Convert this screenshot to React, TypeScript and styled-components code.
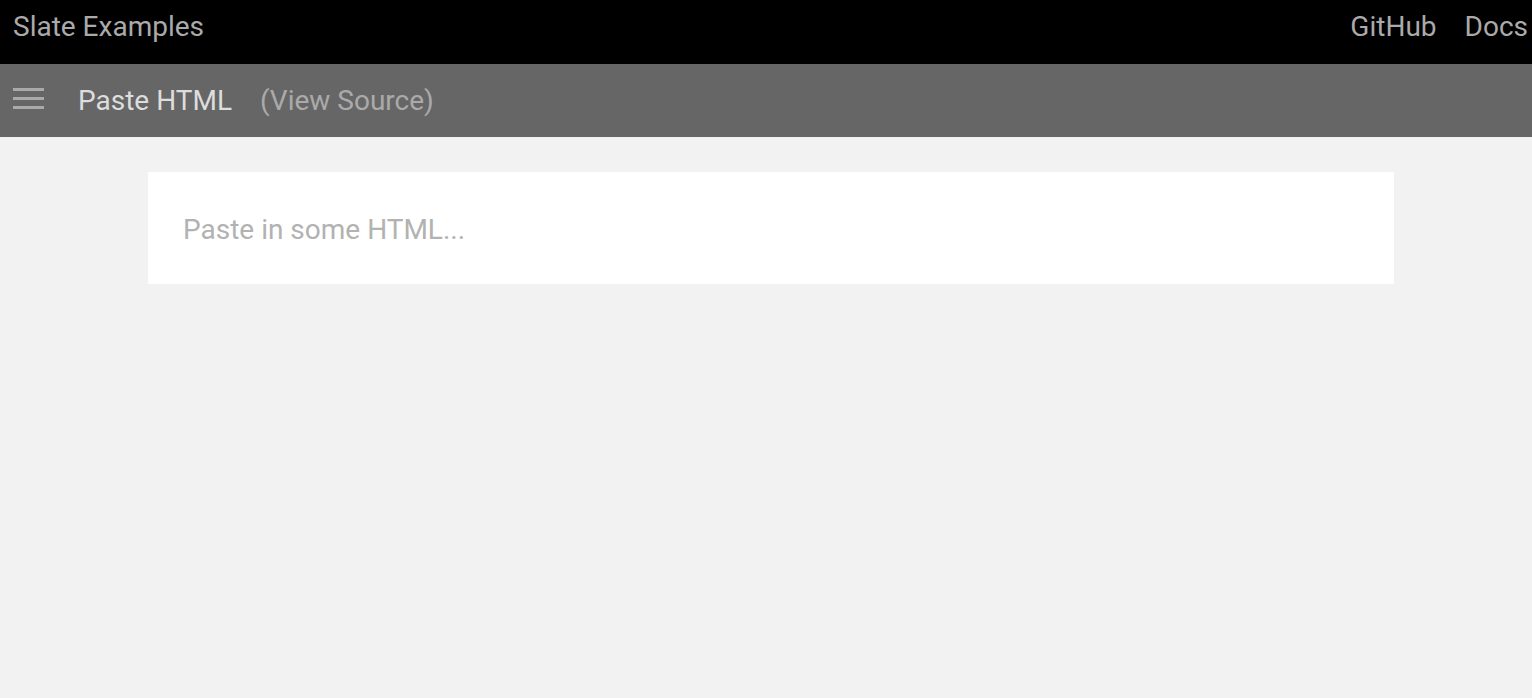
import React from 'react';
import styled, { createGlobalStyle } from 'styled-components';

const GlobalStyle = createGlobalStyle`
  html, body {
    margin: 0;
    padding: 0;
    background: #f2f2f2;
    font-family: Roboto, "Liberation Sans", sans-serif;
  }
`;

const Page = styled.div`
  min-height: 698px;
  background: #f2f2f2;
`;

const Header = styled.header`
  display: flex;
  align-items: flex-start;
  justify-content: space-between;
  height: 64px;
  box-sizing: border-box;
  padding: 13px 4px 0 13px;
  background: #000;
  color: #aaa;
  font-size: 28px;
  line-height: 1;
`;

const Title = styled.span`
  color: #aaa;
`;

const LinkGroup = styled.nav`
  display: flex;
  gap: 28px;
`;

const HeaderLink = styled.a`
  color: #aaa;
  text-decoration: none;
`;

const TabsBar = styled.div`
  display: flex;
  align-items: flex-start;
  height: 73px;
  box-sizing: border-box;
  padding: 23px 0 0 12px;
  background: #666;
  font-size: 28px;
  line-height: 1;
`;

const MenuButton = styled.span`
  display: flex;
  width: 33px;
  height: 24px;
  margin-right: 33px;
`;

const ExampleTitle = styled.span`
  color: #ddd;
  margin-right: 28px;
`;

const SourceLink = styled.a`
  color: #aaa;
  text-decoration: none;
`;

const Wrapper = styled.div`
  padding-top: 35px;
  display: flex;
  justify-content: center;
`;

const Editor = styled.div`
  width: 1246px;
  box-sizing: border-box;
  margin-left: 10px;
  padding: 37px 35px 33px;
  background: #fff;
  font-size: 28px;
  line-height: 42px;
`;

const Placeholder = styled.span`
  color: #aaa;
  opacity: 0.9;
`;

const MenuIcon = () => (
  <svg width="33" height="24" viewBox="0 0 33 24">
    <rect x="1" y="1" width="31" height="3" fill="#aaa" />
    <rect x="1" y="10" width="31" height="3" fill="#aaa" />
    <rect x="1" y="19" width="31" height="3" fill="#aaa" />
  </svg>
);

export default function App() {
  return (
    <Page>
      <GlobalStyle />
      <Header>
        <Title>Slate Examples</Title>
        <LinkGroup>
          <HeaderLink href="#">GitHub</HeaderLink>
          <HeaderLink href="#">Docs</HeaderLink>
        </LinkGroup>
      </Header>
      <TabsBar>
        <MenuButton>
          <MenuIcon />
        </MenuButton>
        <ExampleTitle>Paste HTML</ExampleTitle>
        <SourceLink href="#">(View Source)</SourceLink>
      </TabsBar>
      <Wrapper>
        <Editor>
          <Placeholder>Paste in some HTML...</Placeholder>
        </Editor>
      </Wrapper>
    </Page>
  );
}
